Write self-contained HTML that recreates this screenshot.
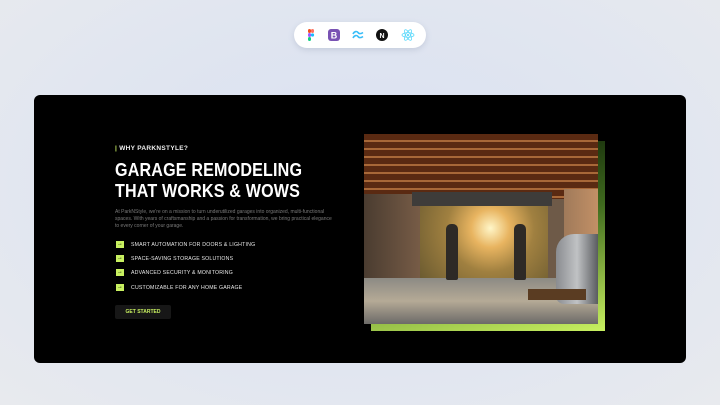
<!DOCTYPE html>
<html><head><meta charset="utf-8"><style>
*{margin:0;padding:0;box-sizing:border-box}
body{width:720px;height:405px;overflow:hidden;background:radial-gradient(ellipse at 50% 45%,#d9e0f2 0%,#e1e6f0 60%,#e8eaee 100%);font-family:"Liberation Sans",sans-serif;position:relative}
.bar{position:absolute;left:294px;top:22px;width:132px;height:26px;background:#fff;border-radius:13px;box-shadow:0 2px 6px rgba(120,130,160,.25)}
.ic{position:absolute;top:6px;width:14px;height:14px}
.card{position:absolute;left:34px;top:95px;width:652px;height:268px;background:#000;border-radius:6px}
.t{position:absolute;color:#fff}
.li{position:absolute;left:116px;font-size:5.2px;color:#e8e8e8;letter-spacing:.2px}
.li b{display:inline-block;width:8px;height:7px;background:#c8f060;color:#000;font-size:6px;line-height:7px;text-align:center;margin-right:7px;vertical-align:middle}
</style></head><body>
<div class="bar">
<svg class="ic" style="left:10px" viewBox="0 0 14 14"><rect x="4" y="1" width="3" height="4" rx="1.5" fill="#f24e1e"/><rect x="7" y="1" width="3" height="4" rx="1.5" fill="#ff7262"/><rect x="4" y="5" width="3" height="4" rx="1.5" fill="#a259ff"/><circle cx="8.5" cy="7" r="1.6" fill="#1abcfe"/><rect x="4" y="9" width="3" height="4" rx="1.5" fill="#0acf83"/></svg>
<svg class="ic" style="left:33px" viewBox="0 0 14 14"><rect x="1" y="1" width="12" height="12" rx="3" fill="#7952b3"/><text x="7" y="10.5" font-size="9" font-weight="bold" fill="#fff" text-anchor="middle" font-family="Liberation Sans">B</text></svg>
<svg class="ic" style="left:57px" viewBox="0 0 14 14"><path d="M2 6c1.5-3 4-3 5-1.5S10 6 12 4.5M2 10c1.5-3 4-3 5-1.5S10 10 12 8.5" stroke="#38bdf8" stroke-width="1.6" fill="none"/></svg>
<svg class="ic" style="left:81px" viewBox="0 0 14 14"><circle cx="7" cy="7" r="6" fill="#111"/><text x="7" y="9.8" font-size="7" font-weight="bold" fill="#fff" text-anchor="middle" font-family="Liberation Sans">N</text></svg>
<svg class="ic" style="left:107px" viewBox="0 0 14 14"><g stroke="#61dafb" stroke-width=".8" fill="none"><ellipse cx="7" cy="7" rx="6" ry="2.3"/><ellipse cx="7" cy="7" rx="6" ry="2.3" transform="rotate(60 7 7)"/><ellipse cx="7" cy="7" rx="6" ry="2.3" transform="rotate(120 7 7)"/></g><circle cx="7" cy="7" r="1.1" fill="#61dafb"/></svg>
</div>
<div class="card"></div>
<div class="t" style="left:115px;top:145px;font-size:6.5px;font-weight:bold;letter-spacing:.3px;color:#eee"><span style="color:#c8f060">|</span> WHY PARKNSTYLE?</div>
<div class="t" style="left:115px;top:159px;font-size:18.5px;font-weight:bold;line-height:21px;letter-spacing:.2px;transform:scaleX(.87);transform-origin:left;white-space:nowrap">GARAGE REMODELING<br>THAT WORKS &amp; WOWS</div>
<div class="t" style="left:115px;top:209px;width:220px;font-size:5px;line-height:7px;color:#7a7a7a">At ParkNStyle, we're on a mission to turn underutilized garages into organized, multi-functional spaces. With years of craftsmanship and a passion for transformation, we bring practical elegance to every corner of your garage.</div>
<div class="li" style="top:241px"><b>→</b>SMART AUTOMATION FOR DOORS &amp; LIGHTING</div>
<div class="li" style="top:255px"><b>→</b>SPACE-SAVING STORAGE SOLUTIONS</div>
<div class="li" style="top:269px"><b>→</b>ADVANCED SECURITY &amp; MONITORING</div>
<div class="li" style="top:284px"><b>→</b>CUSTOMIZABLE FOR ANY HOME GARAGE</div>
<div style="position:absolute;left:115px;top:305px;width:56px;height:14px;background:#171717;border-radius:2px;color:#c8f060;font-size:5px;font-weight:bold;line-height:14px;text-align:center">GET STARTED</div>
<div style="position:absolute;left:371px;top:141px;width:234px;height:190px;background:linear-gradient(170deg,#0a1a05 0%,#3f6a1e 45%,#c8f060 100%)"></div>
<div style="position:absolute;left:364px;top:134px;width:234px;height:190px;overflow:hidden;background:#6e5a48">
 <div style="position:absolute;left:0;top:0;width:234px;height:65px;background:repeating-linear-gradient(180deg,#5a2a12 0 6px,#a86838 6px 8px)"></div>
 <div style="position:absolute;left:0;top:60px;width:60px;height:85px;background:linear-gradient(90deg,#4a3c30,#7a5e48)"></div>
 <div style="position:absolute;left:200px;top:55px;width:34px;height:95px;background:linear-gradient(90deg,#a07a5a,#c29066)"></div>
 <div style="position:absolute;left:48px;top:58px;width:140px;height:14px;background:#3e3c3a"></div>
 <div style="position:absolute;left:56px;top:72px;width:128px;height:74px;background:radial-gradient(circle at 55% 30%,#fff6c8 0%,#e8b460 22%,#a08040 50%,#6a5a30 100%)"></div>
 <div style="position:absolute;left:0;top:144px;width:234px;height:46px;background:linear-gradient(180deg,#8c8a84,#b5aa96 50%,#6c6a68)"></div>
 <div style="position:absolute;left:82px;top:90px;width:12px;height:56px;background:#2e2a26;border-radius:5px 5px 2px 2px"></div>
 <div style="position:absolute;left:150px;top:90px;width:12px;height:56px;background:#2e2a26;border-radius:5px 5px 2px 2px"></div>
 <div style="position:absolute;left:192px;top:100px;width:42px;height:70px;background:linear-gradient(90deg,#8a8c90,#c0c2c4,#5a5c60);border-radius:18px 0 0 8px"></div>
 <div style="position:absolute;left:164px;top:155px;width:58px;height:11px;background:#5a3c22"></div>
</div>
</body></html>
